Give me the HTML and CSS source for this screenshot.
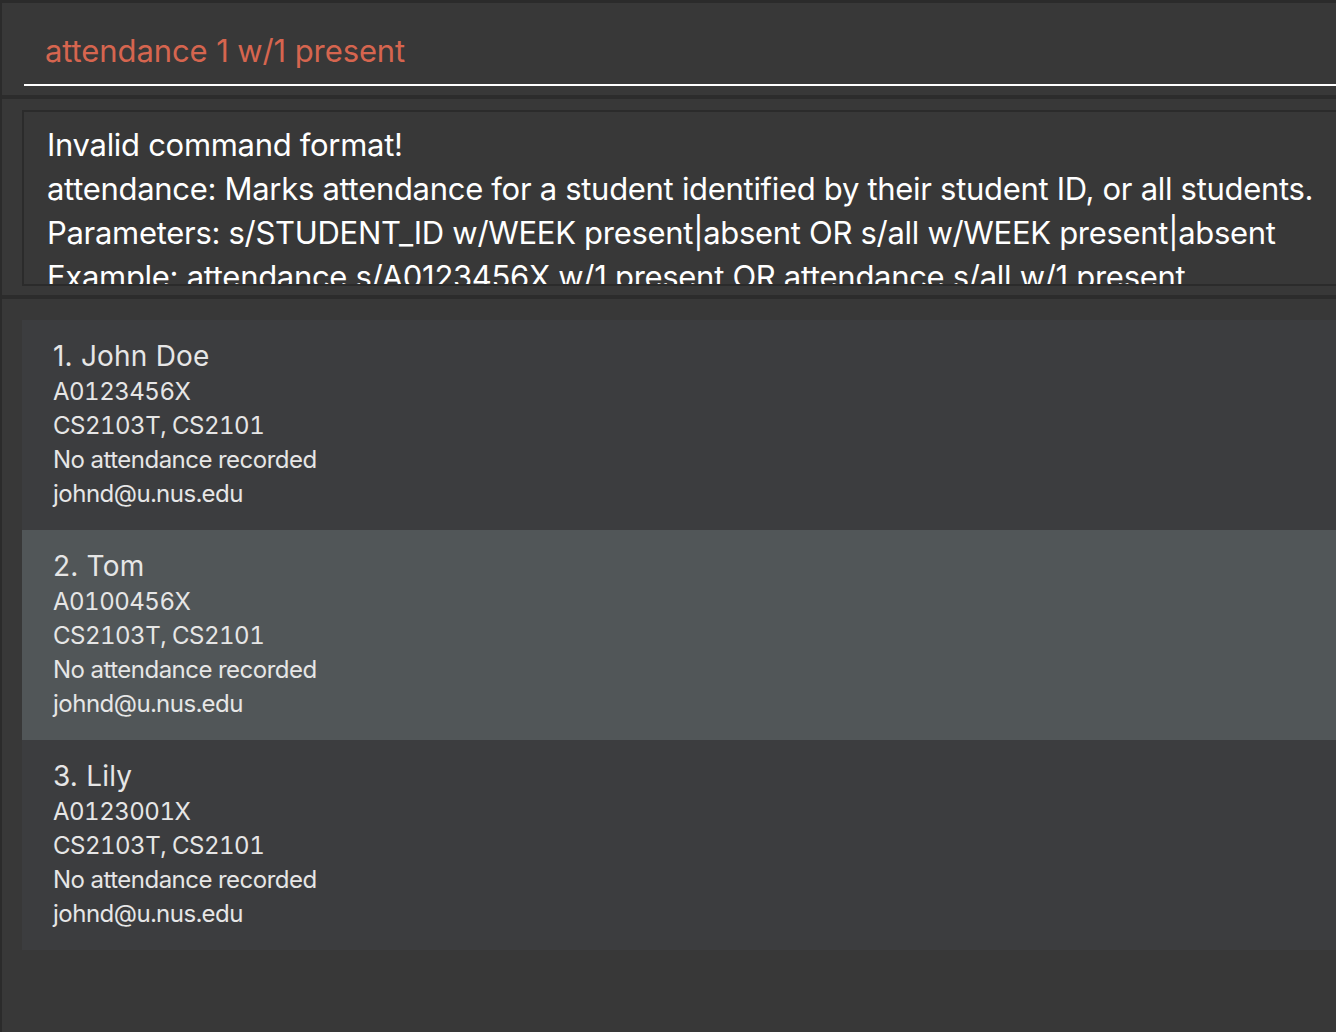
FILE: index.html
```html
<!DOCTYPE html>
<html>
<head>
<meta charset="utf-8">
<link rel="stylesheet" href="styles.css">
</head>
<body>
<div class="window">
  <section class="command-panel">
    <div class="command-field">
      <div class="command-text">attendance 1 w/1 present</div>
    </div>
  </section>
  <section class="result-panel">
    <div class="result-box">
      <div class="result-text">
        <div class="line">Invalid command format!</div>
        <div class="line">attendance: Marks attendance for a student identified by their student ID, or all students.</div>
        <div class="line">Parameters: s/STUDENT_ID w/WEEK present|absent OR s/all w/WEEK present|absent</div>
        <div class="line">Example: attendance s/A0123456X w/1 present OR attendance s/all w/1 present</div>
      </div>
    </div>
  </section>
  <section class="list-panel">
    <div class="card">
      <div class="name">1. John Doe</div>
      <div class="field">A0123456X</div>
      <div class="field">CS2103T, CS2101</div>
      <div class="field">No attendance recorded</div>
      <div class="field">johnd@u.nus.edu</div>
    </div>
    <div class="card alt">
      <div class="name">2. Tom</div>
      <div class="field">A0100456X</div>
      <div class="field">CS2103T, CS2101</div>
      <div class="field">No attendance recorded</div>
      <div class="field">johnd@u.nus.edu</div>
    </div>
    <div class="card">
      <div class="name">3. Lily</div>
      <div class="field">A0123001X</div>
      <div class="field">CS2103T, CS2101</div>
      <div class="field">No attendance recorded</div>
      <div class="field">johnd@u.nus.edu</div>
    </div>
  </section>
</div>
</body>
</html>
```

FILE: styles.css
```css
html, body {
  margin: 0;
  padding: 0;
  background: #383838;
  overflow: hidden;
}
body {
  font-family: Inter, "Noto Sans", sans-serif;
}
.window {
  width: 1336px;
  height: 1032px;
  box-sizing: border-box;
  border-top: 3px solid #2b2b2b;
  border-left: 2px solid #2b2b2b;
  display: flex;
  flex-direction: column;
  background: #383838;
  overflow: hidden;
}
.command-panel {
  height: 96px;
  flex: none;
  box-sizing: border-box;
  border-bottom: 4px solid #2c2c2c;
  padding: 0 0 0 22px;
}
.command-field {
  height: 83px;
  box-sizing: border-box;
  border-bottom: 2px solid #ffffff;
  padding: 28px 0 0 21px;
}
.command-text {
  color: #d6654f;
  font-size: 31px;
  line-height: 40px;
  letter-spacing: -0.1px;
  white-space: nowrap;
}
.result-panel {
  height: 200px;
  flex: none;
  box-sizing: border-box;
  border-bottom: 4px solid #2c2c2c;
  padding: 11px 0 0 20px;
}
.result-box {
  height: 176px;
  box-sizing: border-box;
  border: 2px solid #2b2b2b;
  border-right: none;
  padding: 11px 0 0 23px;
  overflow: hidden;
}
.result-text {
  color: #ffffff;
  font-size: 31px;
  line-height: 44px;
  letter-spacing: -0.3px;
  white-space: nowrap;
}
.list-panel {
  flex: 1;
  padding: 21px 0 0 20px;
}
.card {
  height: 210px;
  box-sizing: border-box;
  background: #3c3d3f;
  padding: 17px 0 0 31px;
  color: #e6e6e6;
}
.card.alt {
  background: #515658;
}
.name {
  font-size: 28px;
  line-height: 38px;
  letter-spacing: 0.2px;
}
.field {
  font-size: 24px;
  line-height: 34px;
  letter-spacing: -0.5px;
  font-variant-numeric: tabular-nums;
}
```
